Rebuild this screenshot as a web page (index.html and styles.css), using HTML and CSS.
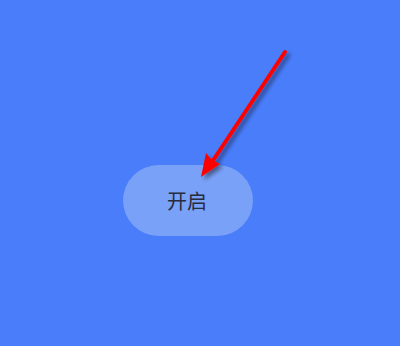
FILE: index.html
```html
<!DOCTYPE html>
<html>
<head>
<meta charset="utf-8">
<link rel="stylesheet" href="styles.css">
</head>
<body>
<div class="stage">
  <button class="pill">开启</button>
  <svg class="arrow" width="400" height="346" viewBox="0 0 400 346">
    <defs>
      <filter id="sh" x="-20%" y="-20%" width="140%" height="140%">
        <feGaussianBlur in="SourceAlpha" stdDeviation="2"/>
        <feOffset dx="3" dy="3" result="b"/>
        <feComponentTransfer><feFuncA type="linear" slope="0.45"/></feComponentTransfer>
        <feMerge><feMergeNode/><feMergeNode in="SourceGraphic"/></feMerge>
      </filter>
    </defs>
    <g filter="url(#sh)">
      <line x1="285" y1="52" x2="212" y2="162" stroke="#ff0000" stroke-width="4" stroke-linecap="round"/>
      <polygon points="201,177 206,153 212,160 220,164" fill="#ff0000"/>
    </g>
  </svg>
</div>
</body>
</html>
```
FILE: styles.css
```css
html, body {
  margin: 0;
  padding: 0;
  width: 400px;
  height: 346px;
  background: #4a7dfa;
  overflow: hidden;
}
.stage {
  position: relative;
  width: 400px;
  height: 346px;
  display: flex;
  justify-content: center;
  padding-top: 165px;
  padding-right: 24px;
  box-sizing: border-box;
}
.pill {
  width: 130px;
  height: 71px;
  border: none;
  border-radius: 36px;
  background: #7aa1f8;
  color: #262b3d;
  font-family: "Noto Sans CJK SC", sans-serif;
  font-size: 20px;
  padding: 0 2px 0 0;
}
.arrow {
  position: absolute;
  left: 0;
  top: 0;
}
```
